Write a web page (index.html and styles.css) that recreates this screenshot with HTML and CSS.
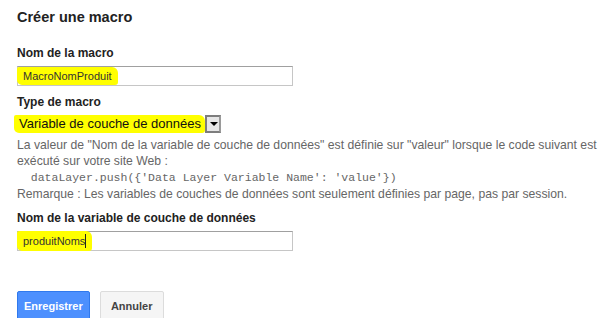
FILE: index.html
```html
<!DOCTYPE html>
<html lang="fr">
<head>
  <meta charset="UTF-8" />
  <title>Créer une macro</title>
  <link rel="stylesheet" href="styles.css">
</head>
<body>

  <h1>Créer une macro</h1>

  <div class="field">
    <label class="field-label">Nom de la macro</label>
    <div class="text-input"><span class="marker">MacroNomProduit</span></div>
  </div>

  <div class="field">
    <label class="field-label">Type de macro</label>
    <div class="select-box">
      <span class="marker select-text">Variable de couche de données</span>
      <span class="select-arrow"></span>
    </div>
    <div class="help">
      La valeur de "Nom de la variable de couche de données" est définie sur "valeur" lorsque le code suivant est<br>
      exécuté sur votre site Web :<br>
      <code>  dataLayer.push({'Data Layer Variable Name': 'value'})</code><br>
      Remarque : Les variables de couches de données sont seulement définies par page, pas par session.
    </div>
  </div>

  <div class="field">
    <label class="field-label">Nom de la variable de couche de données</label>
    <div class="text-input"><span class="marker">produitNoms<span class="caret"></span></span></div>
  </div>

  <div class="actions">
    <button class="btn btn-primary">Enregistrer</button>
    <button class="btn">Annuler</button>
  </div>

</body>
</html>
```

FILE: styles.css
```css
body {
  margin: 0;
  padding: 7px 17px 0;
  font-family: "Liberation Sans", Arial, sans-serif;
  color: #222;
  background-color: #fff;
  overflow: hidden;
}

h1 {
  margin: 0 0 18px;
  font-size: 14.5px;
  font-weight: bold;
  line-height: 20px;
}

.field {
  margin-bottom: 8px;
}

.field-label {
  display: block;
  font-size: 12px;
  font-weight: bold;
  line-height: 16px;
  margin-bottom: 5px;
}

.text-input {
  box-sizing: border-box;
  width: 276px;
  height: 20px;
  border: 1px solid #c6c6c6;
  border-top-color: #a0a0a0;
  display: flex;
  align-items: center;
  font-size: 11px;
}

.marker {
  background-color: #ffff00;
  margin-left: -1px;
  padding: 3px 6px 3px 6px;
  border-radius: 2px 6px 3px 5px;
  color: #333;
}

.caret {
  display: inline-block;
  width: 1px;
  height: 14px;
  background-color: #222;
  vertical-align: -3px;
}

.select-box {
  display: flex;
  align-items: center;
  height: 18px;
  margin-bottom: 4px;
}

.select-text {
  font-size: 13px;
  line-height: 14px;
  padding: 2px 4px 2px 5px;
  margin-left: -3px;
  color: #111;
}

.select-arrow {
  box-sizing: border-box;
  width: 16px;
  height: 18px;
  border: 2px solid #7d7d7d;
  border-right-color: #9a9a9a;
  background-color: #e6e6e6;
  position: relative;
}

.select-arrow::after {
  content: "";
  position: absolute;
  left: 3px;
  top: 5px;
  border-left: 4px solid transparent;
  border-right: 4px solid transparent;
  border-top: 4px solid #000;
}

.help {
  font-size: 12.2px;
  line-height: 16px;
  color: #666;
}

.help code {
  font-family: "Liberation Mono", "Courier New", monospace;
  font-size: 11.5px;
  white-space: pre;
}

.actions {
  margin-top: 40px;
  display: flex;
  gap: 10px;
}

.btn {
  font-family: "Liberation Sans", Arial, sans-serif;
  font-size: 11px;
  font-weight: bold;
  height: 29px;
  min-width: 64px;
  padding: 0 6px;
  border: 1px solid #dcdcdc;
  border-radius: 2px;
  background-color: #f5f5f5;
  color: #444;
}

.btn-primary {
  background-color: #4d90fe;
  border-color: #3079ed;
  color: #fff;
}
```
